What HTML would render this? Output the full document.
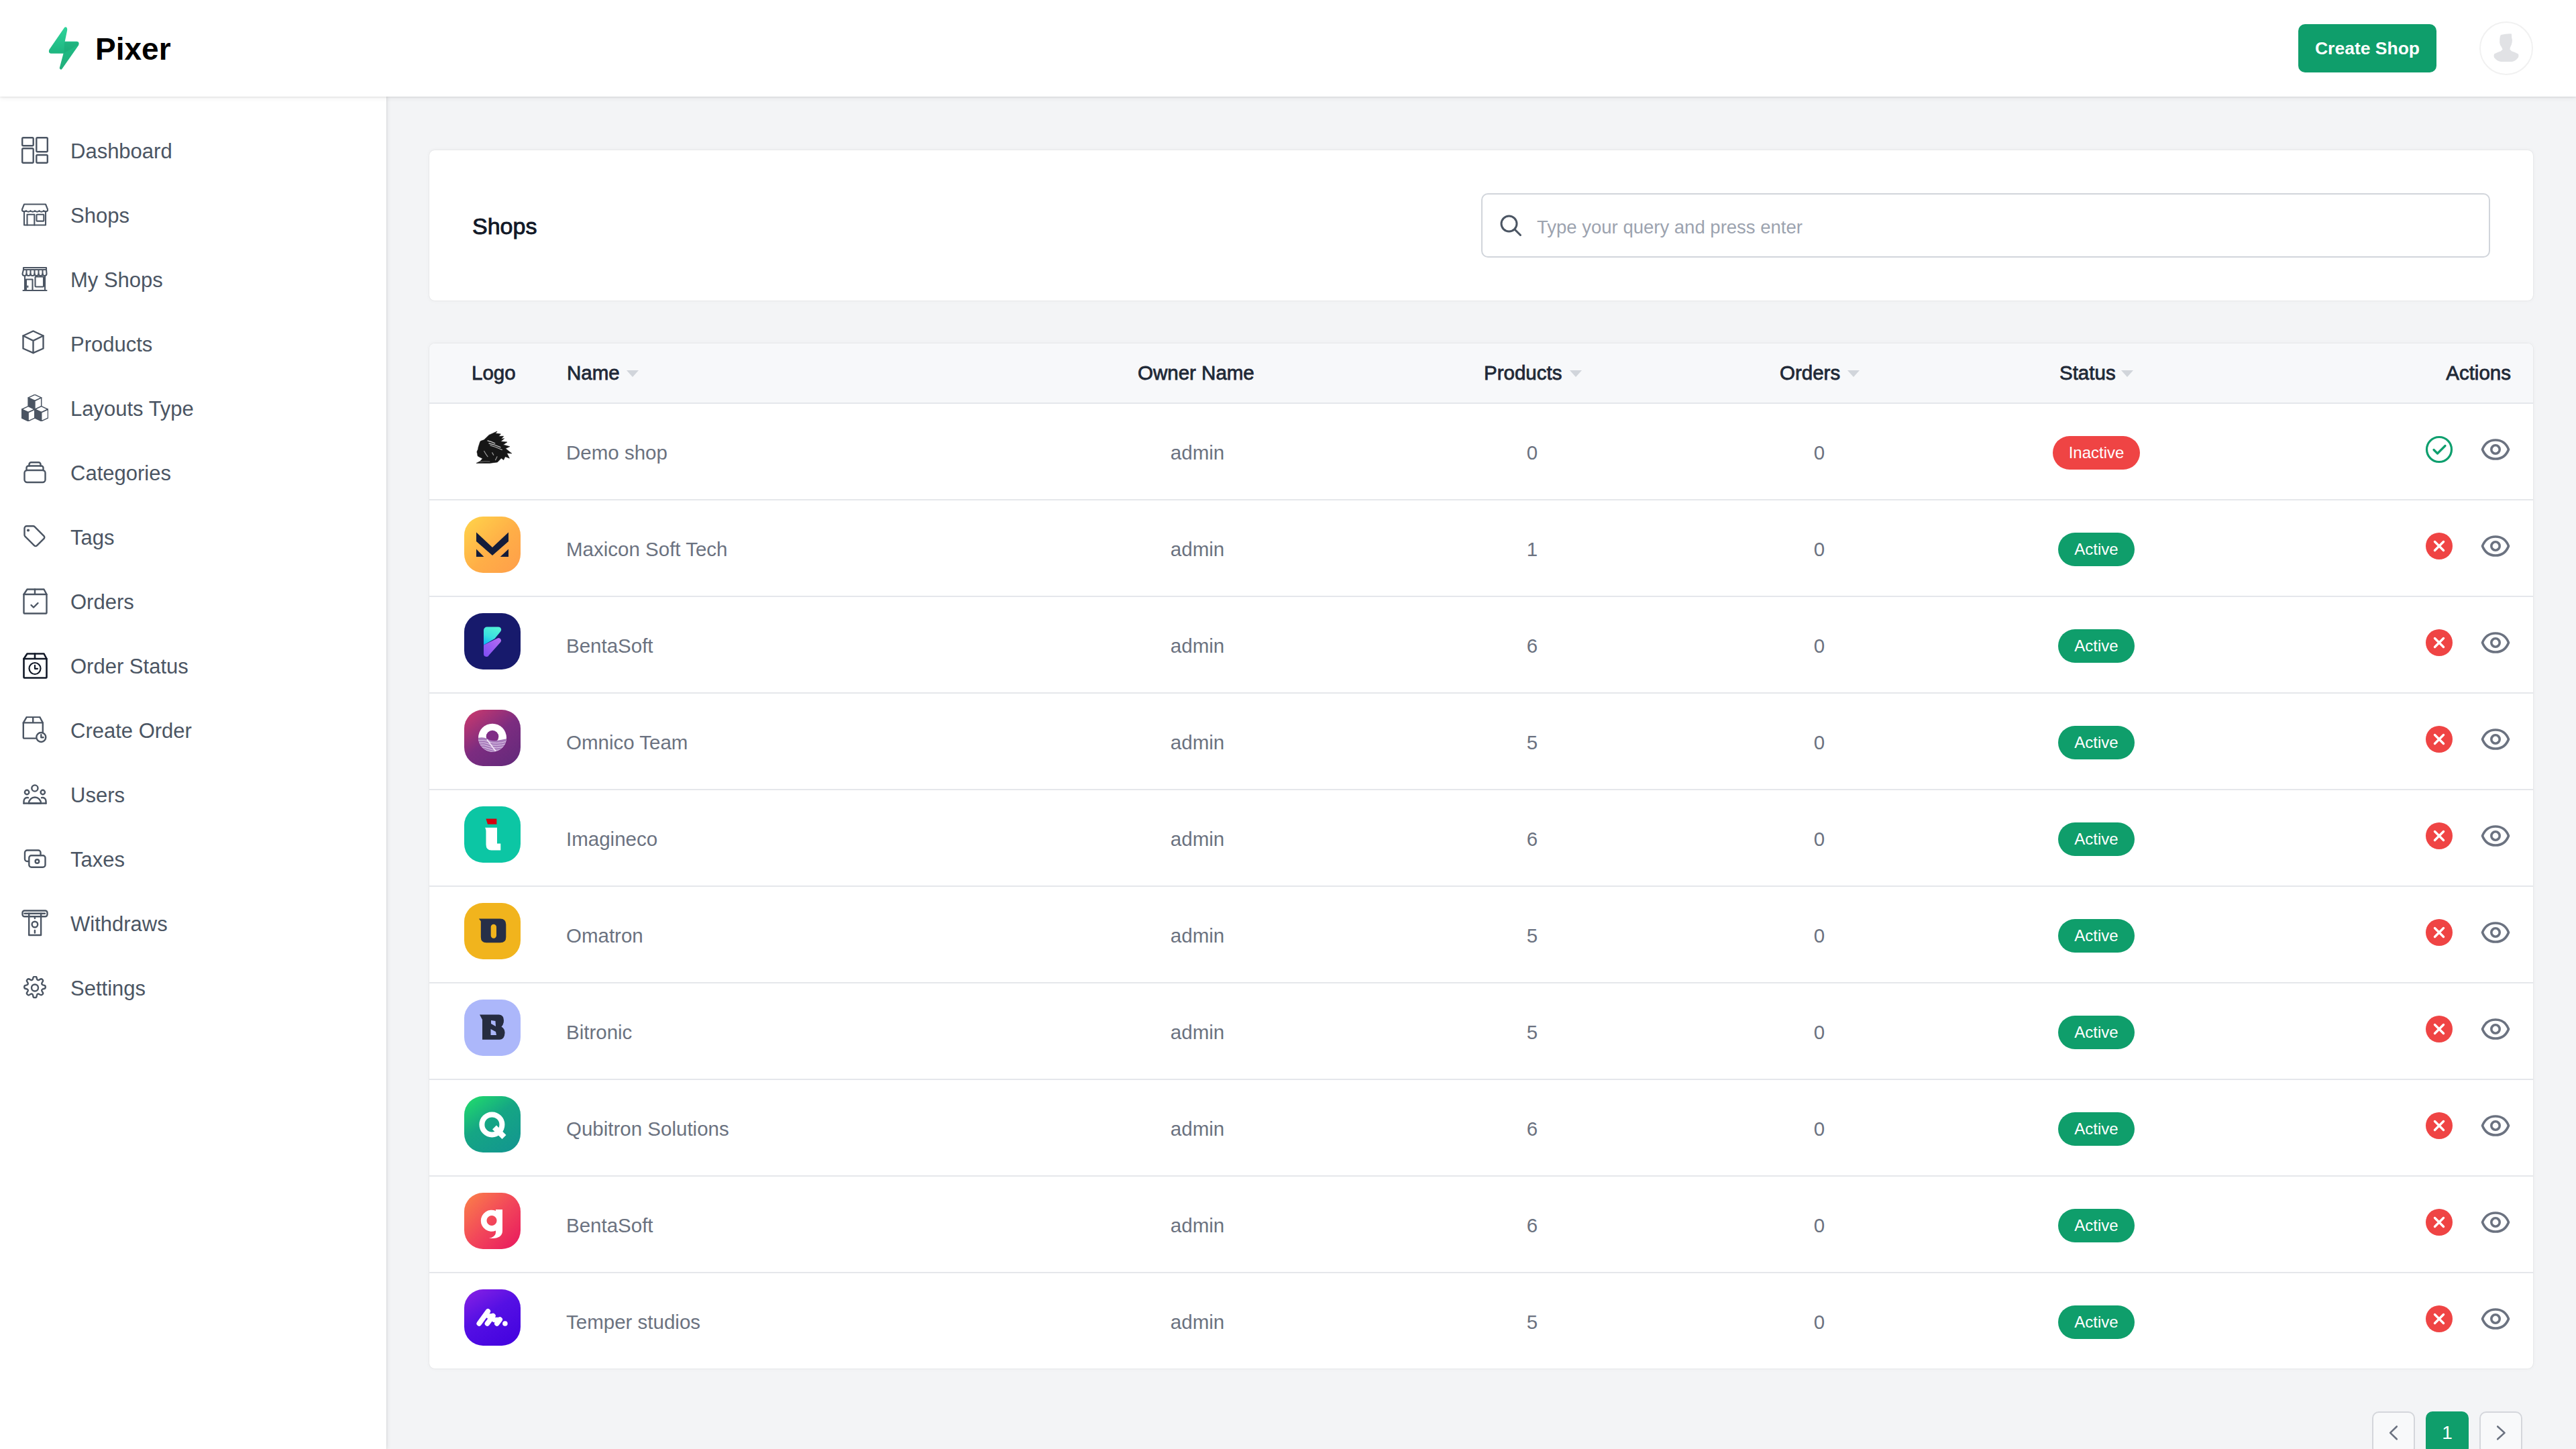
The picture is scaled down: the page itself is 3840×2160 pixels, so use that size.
<!DOCTYPE html>
<html><head><meta charset="utf-8"><title>Pixer - Shops</title>
<style>
*{box-sizing:border-box;margin:0;padding:0}
html,body{width:3840px;height:2160px;overflow:hidden}
body{background:#f3f4f6;font-family:"Liberation Sans",sans-serif;position:relative}
.hdr{position:absolute;left:0;top:0;width:3840px;height:144px;background:#fff;box-shadow:0 1px 3px rgba(0,0,0,.10),0 2px 8px rgba(0,0,0,.06);z-index:5}
.brand{position:absolute;left:142px;top:45.5px;font-size:46px;font-weight:700;color:#000;line-height:54px;letter-spacing:0}
.bolt{position:absolute;left:66px;top:36px}
.cbtn{position:absolute;left:3426px;top:36px;width:206px;height:72px;background:#0f9e6b;border-radius:10px;color:#fff;font-weight:700;font-size:26.5px;line-height:72px;text-align:center}
.av{position:absolute;left:3696px;top:32px;width:80px;height:80px;border-radius:50%;border:2px solid #f1f1f1;background:#fff;overflow:hidden}
.side{position:absolute;left:0;top:144px;width:576px;height:2016px;background:#fff;box-shadow:1px 0 1px rgba(0,0,0,.05),2px 0 6px rgba(0,0,0,.07);z-index:4}
.ni{position:absolute;left:0;width:576px;height:40px}
.ni .ic{position:absolute;width:40px;height:40px}
.ni .ic svg{display:block}
.nt{position:absolute;left:105px;top:1.5px;line-height:40px;font-size:31px;color:#4b5563;white-space:nowrap}
.card{position:absolute;left:640px;background:#fff;border-radius:8px;box-shadow:0 0 1.5px rgba(0,0,0,.12),0 0 6px rgba(0,0,0,.05)}
.ttl{position:absolute;left:64px;top:93px;font-size:34px;font-weight:400;-webkit-text-stroke:0.9px #111827;color:#111827;line-height:40px}
.search{position:absolute;left:1568px;top:64px;width:1504px;height:96px;border:2px solid #d1d5db;border-radius:10px}
.search svg{position:absolute;left:25px;top:29px}
.ph{position:absolute;left:81px;top:3px;line-height:92px;font-size:27.5px;color:#9ca3af;white-space:nowrap}
.th{position:absolute;left:0;top:0;width:3136px;height:90px;background:#f7f8fa;border-radius:8px 8px 0 0;border-bottom:2px solid #e5e7eb}
.th span{position:absolute;top:0;line-height:88px;font-size:29.5px;font-weight:400;-webkit-text-stroke:0.8px #1f2937;color:#1f2937;white-space:nowrap}
.th .tri{position:absolute;top:40px}
.row{position:absolute;left:0;width:3136px;height:144px}
.rb{position:absolute;left:0;top:142px;width:3136px;height:2px;background:#e5e7eb}
.logo{position:absolute;left:52px;top:24px;width:84px;height:84px}
.logo svg{display:block}
.c{position:absolute;top:1.5px;line-height:142px;font-size:29.5px;color:#6b7280;white-space:nowrap}
.name{left:204px}
.ctr{width:300px;text-align:center}
.bw{position:absolute;top:48px;width:300px;text-align:center;height:50px}
.badge{display:inline-block;height:50px;line-height:50px;border-radius:25px;color:#fff;font-size:24px;padding:0 24px}
.act{background:#0f9e6b}
.ina{background:#ef4444}
.ac1{position:absolute;left:2975px;top:47px}
.ac2{position:absolute;left:3058px;top:51px}
.ac1 svg,.ac2 svg{display:block}
.pg{position:absolute;top:2104px;width:64px;height:64px;border-radius:10px}
.pg.o{border:2px solid #d4d6db;background:#f8f9fa}
.pg.a{background:#0f9e6b;color:#fff;font-size:28px;line-height:64px;text-align:center}
.pg svg{position:absolute;left:0;top:0}
</style></head><body>
<div class="hdr">
 <svg class="bolt" width="60" height="72" viewBox="66 36 60 72"><defs><linearGradient id="bg" x1="0" y1="0" x2="0" y2="1"><stop offset="0" stop-color="#2fd39a"/><stop offset="0.55" stop-color="#1fb882"/><stop offset="1" stop-color="#22b07c"/></linearGradient></defs>
 <path d="M96.7 41.5L74 74.5Q72.5 78.5 76 79H95.5L89.5 101.5Q90.5 104 92 102L116.5 67Q118 63 114.5 62.5H95.8L99.5 44.5Q99.5 40 96.7 41.5Z" fill="url(#bg)" stroke="url(#bg)" stroke-width="1.5" stroke-linejoin="round"/>
 <path d="M95.5 79L96 63H114.5Q118 63 116.5 67z" fill="#1b9d6e" opacity="0.35"/></svg>
 <div class="brand">Pixer</div>
 <div class="cbtn">Create Shop</div>
 <div class="av"><svg width="76" height="76" viewBox="0 0 76 76"><path d="M30 18Q38 16 46 16.4L46.2 22Q47.5 26 46.6 29.5Q46 33 44 36.4L43.4 39.5 46 42.2Q52 44 56 46.6Q57 49 56 51.5Q52 57 46.6 58H30Q24 57 20 51.7Q19 49 20 46.6Q24 44 30 42.2L32.6 39.5 30.7 35.8Q28.5 33 28.2 29.5Q28 24 28.8 20.6z" fill="#e1e2e5"/></svg></div>
</div>
<div class="side">
<div style="position:absolute;left:0;top:-144px;width:576px;height:2160px">
<div class="ni" style="top:204px"><div class="ic" style="left:32px;top:0"><svg width="40" height="40" viewBox="0 0 40 40" fill="none" stroke="#4b5563" stroke-width="2.4" stroke-linejoin="round" stroke-linecap="round"><rect x="1.2" y="1.2" width="16.5" height="12" rx="1.5"/><rect x="1.2" y="17.2" width="16.5" height="21.5" rx="1.5"/><rect x="22.3" y="1.2" width="16.5" height="21" rx="1.5"/><rect x="22.3" y="27" width="16.5" height="11.7" rx="1.5"/></svg></div><span class="nt">Dashboard</span></div><div class="ni" style="top:300px"><div class="ic" style="left:32px;top:0"><svg width="40" height="40" viewBox="0 0 40 40" fill="none" stroke="#4b5563" stroke-width="2.1" stroke-linejoin="round" stroke-linecap="round"><path d="M4 4.5h32l3 7.5v2a4 4 0 0 1-6 0a4 4 0 0 1-6.5 0a4 4 0 0 1-6.5 0a4 4 0 0 1-6.5 0a4 4 0 0 1-6.5 0a4 4 0 0 1-6 0v-2z"/><path d="M4 15v20.5h32V15"/><path d="M8.5 35.5V19.8h10.8v15.7"/><rect x="22.5" y="19.8" width="10.8" height="9.8" rx="0.8"/></svg></div><span class="nt">Shops</span></div><div class="ni" style="top:396px"><div class="ic" style="left:32px;top:0"><svg width="40" height="40" viewBox="0 0 40 40" fill="none" stroke="#4b5563" stroke-width="2.1" stroke-linejoin="round" stroke-linecap="round"><path d="M3 3h34v3H3z"/><path d="M3 6l-1.5 6a3 3 0 0 0 6 0a3 3 0 0 0 6 0a3 3 0 0 0 6 0a3 3 0 0 0 6 0a3 3 0 0 0 6 0a3 3 0 0 0 6 0L37 6"/><path d="M7.5 6v6M13.5 6v6M19.5 6v6M25.5 6v6M31.5 6v6"/><path d="M5 15v22h30V15"/><path d="M7 36.8V20.5h9.5v16.3"/><rect x="20.5" y="16.5" width="12.5" height="15" rx="1"/><path d="M9.3 30.5v1.5"/><path d="M2.5 37h35"/></svg></div><span class="nt">My Shops</span></div><div class="ni" style="top:492px"><div class="ic" style="left:32px;top:0"><svg width="40" height="40" viewBox="0 0 40 40" fill="none" stroke="#4b5563" stroke-width="2.4" stroke-linejoin="round" stroke-linecap="round" stroke-width="2.8"><path d="M17.5 1.5L32.5 8.5V27.5L17.5 34.2 2.5 27.5V8.5z"/><path d="M2.5 8.5L17.5 15.8 32.5 8.5M17.5 15.8V34"/></svg></div><span class="nt">Products</span></div><div class="ni" style="top:588px"><div class="ic" style="left:32px;top:0"><svg width="40" height="40" viewBox="0 0 40 40" stroke="#4b5563" stroke-width="1.5" stroke-linejoin="round"><polygon points="19.9,0.3 29.7,4.9 19.9,9.5 10.1,4.9" fill="#fff"/><polygon points="10.1,4.9 19.9,9.5 19.9,22.4 10.1,17.8" fill="#4b5563"/><polygon points="19.9,9.5 29.7,4.9 29.7,17.8 19.9,22.4" fill="#fff"/><polygon points="10.1,17.6 19.9,22.2 10.1,26.8 0.3,22.2" fill="#fff"/><polygon points="0.3,22.2 10.1,26.8 10.1,39.7 0.3,35.1" fill="#4b5563"/><polygon points="10.1,26.8 19.9,22.2 19.9,35.1 10.1,39.7" fill="#fff"/><polygon points="29.7,17.6 39.5,22.2 29.7,26.8 19.9,22.2" fill="#fff"/><polygon points="19.9,22.2 29.7,26.8 29.7,39.7 19.9,35.1" fill="#4b5563"/><polygon points="29.7,26.8 39.5,22.2 39.5,35.1 29.7,39.7" fill="#fff"/></svg></div><span class="nt">Layouts Type</span></div><div class="ni" style="top:684px"><div class="ic" style="left:32px;top:0"><svg width="40" height="40" viewBox="0 0 40 40" fill="none" stroke="#4b5563" stroke-width="2.4" stroke-linejoin="round" stroke-linecap="round" stroke-width="3"><rect x="4.5" y="17" width="31" height="18" rx="4"/><path d="M7.5 17v-3.5a3 3 0 0 1 3-3h19a3 3 0 0 1 3 3V17"/><path d="M11.5 10.5V8.3a3 3 0 0 1 3-3h11a3 3 0 0 1 3 3v2.2"/></svg></div><span class="nt">Categories</span></div><div class="ni" style="top:780px"><div class="ic" style="left:32px;top:0"><svg width="40" height="40" viewBox="0 0 40 40" fill="none" stroke="#4b5563" stroke-width="2.4" stroke-linejoin="round" stroke-linecap="round" stroke-width="2.8"><path d="M4.5 7.5v10a3 3 0 0 0 .9 2.1l13.8 13.8a2.6 2.6 0 0 0 3.7 0l10.6-10.6a2.6 2.6 0 0 0 0-3.7L19.6 5.2a3 3 0 0 0-2.1-.9H7.7a3.2 3.2 0 0 0-3.2 3.2z"/><circle cx="10" cy="10.5" r="0.9" fill="#4b5563"/></svg></div><span class="nt">Tags</span></div><div class="ni" style="top:876px"><div class="ic" style="left:32px;top:0"><svg width="40" height="40" viewBox="0 0 40 40" fill="none" stroke="#4b5563" stroke-width="2.4" stroke-linejoin="round" stroke-linecap="round"><path d="M3.5 10v27.5a1 1 0 0 0 1 1h32a1 1 0 0 0 1-1V10l-4-7.5h-25z"/><path d="M3.5 10h34M20 2.5V10"/><path d="M14.5 26l3.5 3.5 6.5-6.5"/></svg></div><span class="nt">Orders</span></div><div class="ni" style="top:972px"><div class="ic" style="left:32px;top:0"><svg width="40" height="40" viewBox="0 0 40 40" fill="none" stroke="#111827" stroke-width="2.6" stroke-linejoin="round" stroke-linecap="round"><path d="M3.5 10v27.5a1 1 0 0 0 1 1h32a1 1 0 0 0 1-1V10l-4-7.5h-25z"/><path d="M3.5 10h34M20 2.5V10"/><circle cx="20" cy="24.5" r="8.5" stroke-width="2.2"/><path d="M20 19.8v5h4" stroke-width="2.2"/></svg></div><span class="nt">Order Status</span></div><div class="ni" style="top:1068px"><div class="ic" style="left:32px;top:0"><svg width="40" height="40" viewBox="0 0 40 40" fill="none" stroke="#4b5563" stroke-width="2.4" stroke-linejoin="round" stroke-linecap="round" stroke-width="2.2"><path d="M21 32.6H3.8a1 1 0 0 1-1-1V9.4l5-8.6h19.4l4.6 8.6v14"/><path d="M2.8 9.4h29M17.2 1v8.4"/><circle cx="29.3" cy="31" r="7" fill="#fff"/><path d="M29.3 27.2v4h3.3"/></svg></div><span class="nt">Create Order</span></div><div class="ni" style="top:1164px"><div class="ic" style="left:32px;top:0"><svg width="40" height="40" viewBox="0 0 40 40" fill="none" stroke="#4b5563" stroke-width="2.4" stroke-linejoin="round" stroke-linecap="round" stroke-width="3"><circle cx="19.9" cy="11" r="4.6"/><circle cx="8.1" cy="17" r="3.2"/><circle cx="31.8" cy="17" r="3.2"/><path d="M3.5 33.5v-3.5a5 5 0 0 1 6.5-4.8"/><path d="M36.5 33.5v-3.5a5 5 0 0 0-6.5-4.8"/><path d="M11 33.5a9 9 0 0 1 18 0z"/><path d="M3.5 33.5h33"/></svg></div><span class="nt">Users</span></div><div class="ni" style="top:1260px"><div class="ic" style="left:32px;top:0"><svg width="40" height="40" viewBox="0 0 40 40" fill="none" stroke="#4b5563" stroke-width="2.4" stroke-linejoin="round" stroke-linecap="round" stroke-width="3"><path d="M11 24H8.5A3.5 3.5 0 0 1 5 20.5V11a3.5 3.5 0 0 1 3.5-3.5H25a3.5 3.5 0 0 1 3.5 3.5v4"/><rect x="11.3" y="15.3" width="24.2" height="17.5" rx="3.5"/><circle cx="23.4" cy="24" r="2.8"/></svg></div><span class="nt">Taxes</span></div><div class="ni" style="top:1356px"><div class="ic" style="left:32px;top:0"><svg width="40" height="40" viewBox="0 0 40 40" fill="none" stroke="#4b5563" stroke-width="2.4" stroke-linejoin="round" stroke-linecap="round" stroke-width="2.3"><rect x="1.5" y="1.5" width="37" height="8.8" rx="3"/><path d="M4.5 5.8H35"/><path d="M11.2 5.8V38H29.1V5.8"/><circle cx="19.9" cy="22" r="4.3"/><path d="M19.9 10.5v2.5M19.9 31v3.5"/></svg></div><span class="nt">Withdraws</span></div><div class="ni" style="top:1452px"><div class="ic" style="left:32px;top:0"><svg style="margin-top:3px" width="40" height="40" viewBox="0 0 40 40" fill="none" stroke="#4b5563" stroke-width="2.4" stroke-linejoin="round" stroke-linecap="round" stroke-width="2.6"><path d="M17.3 3.2a2.6 2.6 0 0 1 5.4 0l.5 1.6a2 2 0 0 0 2.7 1.1l1.5-.8a2.6 2.6 0 0 1 3.8 3.8l-.8 1.5a2 2 0 0 0 1.1 2.7l1.6.5a2.6 2.6 0 0 1 0 5.4l-1.6.5a2 2 0 0 0-1.1 2.7l.8 1.5a2.6 2.6 0 0 1-3.8 3.8l-1.5-.8a2 2 0 0 0-2.7 1.1l-.5 1.6a2.6 2.6 0 0 1-5.4 0l-.5-1.6a2 2 0 0 0-2.7-1.1l-1.5.8a2.6 2.6 0 0 1-3.8-3.8l.8-1.5a2 2 0 0 0-1.1-2.7l-1.6-.5a2.6 2.6 0 0 1 0-5.4l1.6-.5a2 2 0 0 0 1.1-2.7l-.8-1.5a2.6 2.6 0 0 1 3.8-3.8l1.5.8a2 2 0 0 0 2.7-1.1z"/><circle cx="20" cy="17.5" r="5"/></svg></div><span class="nt">Settings</span></div>
</div></div>
<div class="card" style="top:224px;width:3136px;height:224px">
 <div class="ttl">Shops</div>
 <div class="search"><svg width="36" height="36" viewBox="0 0 36 36" fill="none" stroke="#4b5563" stroke-width="3" stroke-linecap="round"><circle cx="14.5" cy="14.5" r="11.5"/><path d="M23 23l8.5 8.5"/></svg><span class="ph">Type your query and press enter</span></div>
</div>
<div class="card" style="top:512px;width:3136px;height:1528px">
 <div class="th">
  <span style="left:63px">Logo</span>
  <span style="left:205px">Name</span><svg class="tri" style="left:294px" width="18" height="10" viewBox="0 0 18 10"><path d="M0 0h18L9 10z" fill="#d1d5db"/></svg>
  <span style="left:1056px">Owner Name</span>
  <span style="left:1572px">Products</span><svg class="tri" style="left:1700px" width="18" height="10" viewBox="0 0 18 10"><path d="M0 0h18L9 10z" fill="#d1d5db"/></svg>
  <span style="left:2013px">Orders</span><svg class="tri" style="left:2114px" width="18" height="10" viewBox="0 0 18 10"><path d="M0 0h18L9 10z" fill="#d1d5db"/></svg>
  <span style="left:2430px">Status</span><svg class="tri" style="left:2522px" width="18" height="10" viewBox="0 0 18 10"><path d="M0 0h18L9 10z" fill="#d1d5db"/></svg>
  <span style="right:33px">Actions</span>
 </div>
 <div class="row" style="top:90px">
<div class="logo"><svg width="84" height="84" viewBox="0 0 84 84"><g transform="translate(0 4)"><path fill="#161616" stroke="#161616" stroke-width="0.6" stroke-linejoin="round" d="M49.1,13.0 L46.6,15.9 L54.4,16.9 L51.5,20.3 L58.7,20.3 L55.3,24.2 L59.7,23.7 L54.4,28 L64,29 L58.2,32.9 L67.9,35.7 L61.6,38.6 L70.8,45.9 L63.6,45.4 L67.4,53.1 L61.1,50.7 L58.7,55.6 L55.3,53.1 L49.5,58.9 L38,60.4 L18.1,60.4 L23.9,57.5 L27.3,53.6 L22.5,51.2 L20.1,49.8 L19.6,46.4 L18.9,43.5 L20.6,39.6 L21,36.7 L23.5,29 L24.4,27.5 L29.7,25.6 L37,18.4Z"/><g stroke="#bdbdbd" fill="none" stroke-linecap="round"><path d="M35 27Q40 28 45.7 30.9" stroke-width="1.3"/><path d="M37 31Q45 32.5 53.9 36.7" stroke-width="1.4"/><path d="M38.9 34Q47 36 56.3 40.6" stroke-width="1.1"/><path d="M29.7 42.5Q32 47 35 50.7" stroke-width="1.2" stroke="#9a9a9a"/><path d="M41.8 44.9L43.7 48.3" stroke-width="1.3" stroke="#9a9a9a"/><path d="M49 50.7Q48 53 46.6 55.6" stroke-width="1.2" stroke="#9a9a9a"/><path d="M24 58.5Q31 57 38 58" stroke-width="0.8" stroke="#8a8a8a"/></g></g></svg></div>
<div class="c name">Demo shop</div>
<div class="c ctr" style="left:995px">admin</div>
<div class="c ctr" style="left:1494px">0</div>
<div class="c ctr" style="left:1922px">0</div>
<div class="bw" style="left:2335px"><span class="badge ina">Inactive</span></div>
<div class="ac1"><svg width="42" height="42" viewBox="0 0 42 42" fill="none" stroke="#0e9f6e" stroke-width="3.2" stroke-linecap="round" stroke-linejoin="round"><circle cx="21" cy="21" r="18.5"/><path d="M13 21.5l5.5 5.5L30 15.5"/></svg></div><div class="ac2"><svg width="44" height="34" viewBox="0 0 44 34" fill="none" stroke="#6b7280" stroke-width="3.6" stroke-linecap="round" stroke-linejoin="round"><path d="M2.5 17C6 8 13 3 22 3s16 5 19.5 14C38 26 31 31 22 31S6 26 2.5 17z"/><circle cx="22" cy="17" r="6.2"/></svg></div>
<div class="rb"></div></div><div class="row" style="top:234px">
<div class="logo"><svg width="84" height="84" viewBox="0 0 84 84"><defs><linearGradient id="lg1" x1="0" y1="0" x2="1" y2="1"><stop offset="0" stop-color="#ffd54a"/><stop offset="0.55" stop-color="#ffae47"/><stop offset="1" stop-color="#ff9e4a"/></linearGradient></defs>
<rect width="84" height="84" rx="28" fill="url(#lg1)"/><g fill="#131c3a"><path d="M18 23.6L42 46 66 23.6V37L42 58 18 37z"/><path d="M18 48.4V60h11.4z"/><path d="M66 48.4V60H53.7z"/></g></svg></div>
<div class="c name">Maxicon Soft Tech</div>
<div class="c ctr" style="left:995px">admin</div>
<div class="c ctr" style="left:1494px">1</div>
<div class="c ctr" style="left:1922px">0</div>
<div class="bw" style="left:2335px"><span class="badge act">Active</span></div>
<div class="ac1"><svg width="42" height="42" viewBox="0 0 42 42"><circle cx="21" cy="21" r="20" fill="#ef4444"/><path d="M14.5 14.5l13 13M27.5 14.5l-13 13" stroke="#fff" stroke-width="3.4" stroke-linecap="round"/></svg></div><div class="ac2"><svg width="44" height="34" viewBox="0 0 44 34" fill="none" stroke="#6b7280" stroke-width="3.6" stroke-linecap="round" stroke-linejoin="round"><path d="M2.5 17C6 8 13 3 22 3s16 5 19.5 14C38 26 31 31 22 31S6 26 2.5 17z"/><circle cx="22" cy="17" r="6.2"/></svg></div>
<div class="rb"></div></div><div class="row" style="top:378px">
<div class="logo"><svg width="84" height="84" viewBox="0 0 84 84"><defs><linearGradient id="lg2a" x1="0.6" y1="0" x2="0.2" y2="1"><stop offset="0" stop-color="#52f2d6"/><stop offset="0.55" stop-color="#3adfe0"/><stop offset="1" stop-color="#0eb8f2"/></linearGradient><linearGradient id="lg2b" x1="1" y1="0" x2="0" y2="1"><stop offset="0" stop-color="#b86ef2"/><stop offset="1" stop-color="#7d4cf4"/></linearGradient></defs>
<rect width="84" height="84" rx="28" fill="#171a6c"/><path d="M29 25.5a5 5 0 0 1 5-5H51a4.2 4.2 0 0 1 3.3 6.8L45.5 38L29 47.5z" fill="url(#lg2a)"/><path d="M29 47.5L50 37.3a3.8 3.8 0 0 1 4.2 6L37 62.5a4.2 4.2 0 0 1-8-2.2z" fill="url(#lg2b)"/></svg></div>
<div class="c name">BentaSoft</div>
<div class="c ctr" style="left:995px">admin</div>
<div class="c ctr" style="left:1494px">6</div>
<div class="c ctr" style="left:1922px">0</div>
<div class="bw" style="left:2335px"><span class="badge act">Active</span></div>
<div class="ac1"><svg width="42" height="42" viewBox="0 0 42 42"><circle cx="21" cy="21" r="20" fill="#ef4444"/><path d="M14.5 14.5l13 13M27.5 14.5l-13 13" stroke="#fff" stroke-width="3.4" stroke-linecap="round"/></svg></div><div class="ac2"><svg width="44" height="34" viewBox="0 0 44 34" fill="none" stroke="#6b7280" stroke-width="3.6" stroke-linecap="round" stroke-linejoin="round"><path d="M2.5 17C6 8 13 3 22 3s16 5 19.5 14C38 26 31 31 22 31S6 26 2.5 17z"/><circle cx="22" cy="17" r="6.2"/></svg></div>
<div class="rb"></div></div><div class="row" style="top:522px">
<div class="logo"><svg width="84" height="84" viewBox="0 0 84 84"><defs><linearGradient id="lg3" x1="0" y1="0" x2="0.75" y2="1"><stop offset="0" stop-color="#d03a6c"/><stop offset="0.55" stop-color="#7c2c80"/><stop offset="1" stop-color="#672a7c"/></linearGradient><clipPath id="cp3"><circle cx="42" cy="41.7" r="21"/></clipPath></defs>
<rect width="84" height="84" rx="28" fill="url(#lg3)"/><g clip-path="url(#cp3)"><rect x="20" y="20" width="44" height="44" fill="#fff"/><circle cx="42" cy="40" r="9.3" fill="#7f2d86"/><path d="M20 42Q28 40 34 43Q40 47 48 46Q56 44.5 64 43V64H20z" fill="#a77bbb"/><g fill="none" stroke="#e6d3ee" stroke-width="0.9"><path d="M20 46Q30 44 38 48T64 47M20 49.5Q30 47.5 38 51.5T64 50.5M20 53Q30 51 38 55T64 54M20 56.5Q30 54.5 38 58.5T64 57.5M20 60Q30 58 38 62T64 61"/></g><path d="M33.8 44.3L47 62" stroke="#f3e6f7" stroke-width="1.8"/></g></svg></div>
<div class="c name">Omnico Team</div>
<div class="c ctr" style="left:995px">admin</div>
<div class="c ctr" style="left:1494px">5</div>
<div class="c ctr" style="left:1922px">0</div>
<div class="bw" style="left:2335px"><span class="badge act">Active</span></div>
<div class="ac1"><svg width="42" height="42" viewBox="0 0 42 42"><circle cx="21" cy="21" r="20" fill="#ef4444"/><path d="M14.5 14.5l13 13M27.5 14.5l-13 13" stroke="#fff" stroke-width="3.4" stroke-linecap="round"/></svg></div><div class="ac2"><svg width="44" height="34" viewBox="0 0 44 34" fill="none" stroke="#6b7280" stroke-width="3.6" stroke-linecap="round" stroke-linejoin="round"><path d="M2.5 17C6 8 13 3 22 3s16 5 19.5 14C38 26 31 31 22 31S6 26 2.5 17z"/><circle cx="22" cy="17" r="6.2"/></svg></div>
<div class="rb"></div></div><div class="row" style="top:666px">
<div class="logo"><svg width="84" height="84" viewBox="0 0 84 84"><rect width="84" height="84" rx="28" fill="#0cc6a4"/><path d="M32.4 18.5h16v8.3H35z" fill="#d4000f"/><path d="M31 31.7H49V55.6H54.3V65.5H40.5Q32.5 65.5 32.5 57V36.5Q32.5 34 31 31.7z" fill="#fff"/></svg></div>
<div class="c name">Imagineco</div>
<div class="c ctr" style="left:995px">admin</div>
<div class="c ctr" style="left:1494px">6</div>
<div class="c ctr" style="left:1922px">0</div>
<div class="bw" style="left:2335px"><span class="badge act">Active</span></div>
<div class="ac1"><svg width="42" height="42" viewBox="0 0 42 42"><circle cx="21" cy="21" r="20" fill="#ef4444"/><path d="M14.5 14.5l13 13M27.5 14.5l-13 13" stroke="#fff" stroke-width="3.4" stroke-linecap="round"/></svg></div><div class="ac2"><svg width="44" height="34" viewBox="0 0 44 34" fill="none" stroke="#6b7280" stroke-width="3.6" stroke-linecap="round" stroke-linejoin="round"><path d="M2.5 17C6 8 13 3 22 3s16 5 19.5 14C38 26 31 31 22 31S6 26 2.5 17z"/><circle cx="22" cy="17" r="6.2"/></svg></div>
<div class="rb"></div></div><div class="row" style="top:810px">
<div class="logo"><svg width="84" height="84" viewBox="0 0 84 84"><rect width="84" height="84" rx="28" fill="#f1b41d"/><path fill-rule="evenodd" fill="#262f48" d="M21.8 23.5H53.6Q62.3 23.5 62.3 32V51Q62.3 59.3 53.6 59.3H33Q24.8 59.3 24.8 51V27.3Z M39.7 36a4 4 0 0 1 8.3 0V48.5a4 4 0 0 1-8.3 0Z"/></svg></div>
<div class="c name">Omatron</div>
<div class="c ctr" style="left:995px">admin</div>
<div class="c ctr" style="left:1494px">5</div>
<div class="c ctr" style="left:1922px">0</div>
<div class="bw" style="left:2335px"><span class="badge act">Active</span></div>
<div class="ac1"><svg width="42" height="42" viewBox="0 0 42 42"><circle cx="21" cy="21" r="20" fill="#ef4444"/><path d="M14.5 14.5l13 13M27.5 14.5l-13 13" stroke="#fff" stroke-width="3.4" stroke-linecap="round"/></svg></div><div class="ac2"><svg width="44" height="34" viewBox="0 0 44 34" fill="none" stroke="#6b7280" stroke-width="3.6" stroke-linecap="round" stroke-linejoin="round"><path d="M2.5 17C6 8 13 3 22 3s16 5 19.5 14C38 26 31 31 22 31S6 26 2.5 17z"/><circle cx="22" cy="17" r="6.2"/></svg></div>
<div class="rb"></div></div><div class="row" style="top:954px">
<div class="logo"><svg width="84" height="84" viewBox="0 0 84 84"><rect width="84" height="84" rx="28" fill="#acb7fa"/><path fill-rule="evenodd" fill="#262c40" d="M23 22.5H52Q59 23 59 31Q59 37 55.5 40.5Q61 44 60.5 50Q60 59.5 53 59.8H27V30Z M40 31L46.5 32L47 40L40 36Z M39.5 44L47 48L48 53L39.5 53Z"/></svg></div>
<div class="c name">Bitronic</div>
<div class="c ctr" style="left:995px">admin</div>
<div class="c ctr" style="left:1494px">5</div>
<div class="c ctr" style="left:1922px">0</div>
<div class="bw" style="left:2335px"><span class="badge act">Active</span></div>
<div class="ac1"><svg width="42" height="42" viewBox="0 0 42 42"><circle cx="21" cy="21" r="20" fill="#ef4444"/><path d="M14.5 14.5l13 13M27.5 14.5l-13 13" stroke="#fff" stroke-width="3.4" stroke-linecap="round"/></svg></div><div class="ac2"><svg width="44" height="34" viewBox="0 0 44 34" fill="none" stroke="#6b7280" stroke-width="3.6" stroke-linecap="round" stroke-linejoin="round"><path d="M2.5 17C6 8 13 3 22 3s16 5 19.5 14C38 26 31 31 22 31S6 26 2.5 17z"/><circle cx="22" cy="17" r="6.2"/></svg></div>
<div class="rb"></div></div><div class="row" style="top:1098px">
<div class="logo"><svg width="84" height="84" viewBox="0 0 84 84"><defs><linearGradient id="lg7" x1="0" y1="0" x2="0.7" y2="1"><stop offset="0" stop-color="#22e06a"/><stop offset="0.5" stop-color="#15a684"/><stop offset="1" stop-color="#13988e"/></linearGradient></defs>
<rect width="84" height="84" rx="28" fill="url(#lg7)"/><circle cx="41.4" cy="42.4" r="15" fill="none" stroke="#fff" stroke-width="8"/><path d="M45 46.5L59.5 61" stroke="#fff" stroke-width="8.5"/></svg></div>
<div class="c name">Qubitron Solutions</div>
<div class="c ctr" style="left:995px">admin</div>
<div class="c ctr" style="left:1494px">6</div>
<div class="c ctr" style="left:1922px">0</div>
<div class="bw" style="left:2335px"><span class="badge act">Active</span></div>
<div class="ac1"><svg width="42" height="42" viewBox="0 0 42 42"><circle cx="21" cy="21" r="20" fill="#ef4444"/><path d="M14.5 14.5l13 13M27.5 14.5l-13 13" stroke="#fff" stroke-width="3.4" stroke-linecap="round"/></svg></div><div class="ac2"><svg width="44" height="34" viewBox="0 0 44 34" fill="none" stroke="#6b7280" stroke-width="3.6" stroke-linecap="round" stroke-linejoin="round"><path d="M2.5 17C6 8 13 3 22 3s16 5 19.5 14C38 26 31 31 22 31S6 26 2.5 17z"/><circle cx="22" cy="17" r="6.2"/></svg></div>
<div class="rb"></div></div><div class="row" style="top:1242px">
<div class="logo"><svg width="84" height="84" viewBox="0 0 84 84"><defs><linearGradient id="lg8" x1="0" y1="0" x2="1" y2="1"><stop offset="0" stop-color="#fb8248"/><stop offset="0.5" stop-color="#f2475a"/><stop offset="1" stop-color="#e8175e"/></linearGradient></defs>
<rect width="84" height="84" rx="28" fill="url(#lg8)"/><path fill-rule="evenodd" d="M57 25V57c0 7-6 11-14 11h-6c5-1 10-4 10-9v-2.5A16 16 0 1 1 47 27V25z M41 34a7.5 7.5 0 1 0 0.01 0z" fill="#fff"/></svg></div>
<div class="c name">BentaSoft</div>
<div class="c ctr" style="left:995px">admin</div>
<div class="c ctr" style="left:1494px">6</div>
<div class="c ctr" style="left:1922px">0</div>
<div class="bw" style="left:2335px"><span class="badge act">Active</span></div>
<div class="ac1"><svg width="42" height="42" viewBox="0 0 42 42"><circle cx="21" cy="21" r="20" fill="#ef4444"/><path d="M14.5 14.5l13 13M27.5 14.5l-13 13" stroke="#fff" stroke-width="3.4" stroke-linecap="round"/></svg></div><div class="ac2"><svg width="44" height="34" viewBox="0 0 44 34" fill="none" stroke="#6b7280" stroke-width="3.6" stroke-linecap="round" stroke-linejoin="round"><path d="M2.5 17C6 8 13 3 22 3s16 5 19.5 14C38 26 31 31 22 31S6 26 2.5 17z"/><circle cx="22" cy="17" r="6.2"/></svg></div>
<div class="rb"></div></div><div class="row" style="top:1386px">
<div class="logo"><svg width="84" height="84" viewBox="0 0 84 84"><defs><linearGradient id="lg9" x1="0" y1="0" x2="0.6" y2="1"><stop offset="0" stop-color="#8a22e4"/><stop offset="0.5" stop-color="#5510e4"/><stop offset="1" stop-color="#4605e0"/></linearGradient></defs>
<rect width="84" height="84" rx="28" fill="url(#lg9)"/><g stroke="#fff" stroke-width="7.5" stroke-linecap="round" stroke-linejoin="round" fill="none"><path d="M22.2 51L35.4 32.8M34.4 51L43 39.5M48.8 51L53.3 45"/><path d="M36.5 40H42M45 45.5H52"/></g><circle cx="60.9" cy="51" r="3.8" fill="#fff"/></svg></div>
<div class="c name">Temper studios</div>
<div class="c ctr" style="left:995px">admin</div>
<div class="c ctr" style="left:1494px">5</div>
<div class="c ctr" style="left:1922px">0</div>
<div class="bw" style="left:2335px"><span class="badge act">Active</span></div>
<div class="ac1"><svg width="42" height="42" viewBox="0 0 42 42"><circle cx="21" cy="21" r="20" fill="#ef4444"/><path d="M14.5 14.5l13 13M27.5 14.5l-13 13" stroke="#fff" stroke-width="3.4" stroke-linecap="round"/></svg></div><div class="ac2"><svg width="44" height="34" viewBox="0 0 44 34" fill="none" stroke="#6b7280" stroke-width="3.6" stroke-linecap="round" stroke-linejoin="round"><path d="M2.5 17C6 8 13 3 22 3s16 5 19.5 14C38 26 31 31 22 31S6 26 2.5 17z"/><circle cx="22" cy="17" r="6.2"/></svg></div>
</div>
</div>
<div class="pg o" style="left:3536px"><svg width="64" height="64" viewBox="0 0 64 64" fill="none" stroke="#6b7280" stroke-width="2.6" stroke-linecap="round" stroke-linejoin="round"><path d="M34.8 20.5L25.1 29.9L34.8 39.3"/></svg></div>
<div class="pg a" style="left:3616px">1</div>
<div class="pg o" style="left:3696px"><svg width="64" height="64" viewBox="0 0 64 64" fill="none" stroke="#6b7280" stroke-width="2.6" stroke-linecap="round" stroke-linejoin="round"><path d="M25.2 20.5L35.5 29.9L25.2 39.3"/></svg></div>
<script>(function(){var w=window.innerWidth||3840;var k=w/3840;if(Math.abs(k-1)>0.002){document.documentElement.style.zoom=k;}})();</script>
</body></html>
